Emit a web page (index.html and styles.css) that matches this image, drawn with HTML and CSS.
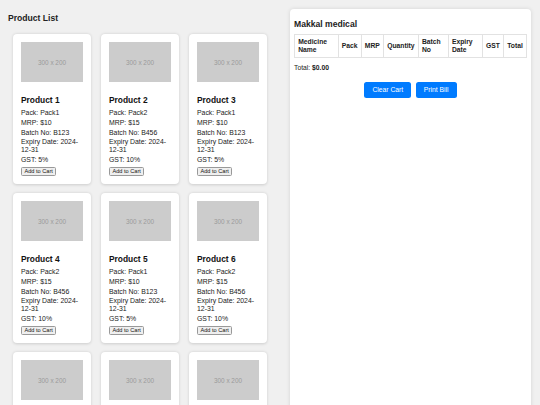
FILE: index.html
```html
<!DOCTYPE html>
<html lang="en">
<head>
    <meta charset="UTF-8">
    <meta name="viewport" content="width=device-width, initial-scale=1.0">
    <title>Makkal medical</title>
    <link rel="stylesheet" href="styles.css">
</head>
<body>
    <div class="app">
        <!-- Products -->
        <div class="product-section">
            <h2>Product List</h2>
            <div class="products">
                <div class="card">
                    <div class="thumb">300 x 200</div>
                    <h3>Product 1</h3>
                    <p>Pack: Pack1</p>
                    <p>MRP: $10</p>
                    <p>Batch No: B123</p>
                    <p>Expiry Date: 2024-12-31</p>
                    <p>GST: 5%</p>
                    <button class="add-btn">Add to Cart</button>
                </div>
                <div class="card">
                    <div class="thumb">300 x 200</div>
                    <h3>Product 2</h3>
                    <p>Pack: Pack2</p>
                    <p>MRP: $15</p>
                    <p>Batch No: B456</p>
                    <p>Expiry Date: 2024-12-31</p>
                    <p>GST: 10%</p>
                    <button class="add-btn">Add to Cart</button>
                </div>
                <div class="card">
                    <div class="thumb">300 x 200</div>
                    <h3>Product 3</h3>
                    <p>Pack: Pack1</p>
                    <p>MRP: $10</p>
                    <p>Batch No: B123</p>
                    <p>Expiry Date: 2024-12-31</p>
                    <p>GST: 5%</p>
                    <button class="add-btn">Add to Cart</button>
                </div>
                <div class="card">
                    <div class="thumb">300 x 200</div>
                    <h3>Product 4</h3>
                    <p>Pack: Pack2</p>
                    <p>MRP: $15</p>
                    <p>Batch No: B456</p>
                    <p>Expiry Date: 2024-12-31</p>
                    <p>GST: 10%</p>
                    <button class="add-btn">Add to Cart</button>
                </div>
                <div class="card">
                    <div class="thumb">300 x 200</div>
                    <h3>Product 5</h3>
                    <p>Pack: Pack1</p>
                    <p>MRP: $10</p>
                    <p>Batch No: B123</p>
                    <p>Expiry Date: 2024-12-31</p>
                    <p>GST: 5%</p>
                    <button class="add-btn">Add to Cart</button>
                </div>
                <div class="card">
                    <div class="thumb">300 x 200</div>
                    <h3>Product 6</h3>
                    <p>Pack: Pack2</p>
                    <p>MRP: $15</p>
                    <p>Batch No: B456</p>
                    <p>Expiry Date: 2024-12-31</p>
                    <p>GST: 10%</p>
                    <button class="add-btn">Add to Cart</button>
                </div>
                <div class="card">
                    <div class="thumb">300 x 200</div>
                    <h3>Product 7</h3>
                    <p>Pack: Pack1</p>
                    <p>MRP: $10</p>
                    <p>Batch No: B123</p>
                    <p>Expiry Date: 2024-12-31</p>
                    <p>GST: 5%</p>
                    <button class="add-btn">Add to Cart</button>
                </div>
                <div class="card">
                    <div class="thumb">300 x 200</div>
                    <h3>Product 8</h3>
                    <p>Pack: Pack2</p>
                    <p>MRP: $15</p>
                    <p>Batch No: B456</p>
                    <p>Expiry Date: 2024-12-31</p>
                    <p>GST: 10%</p>
                    <button class="add-btn">Add to Cart</button>
                </div>
                <div class="card">
                    <div class="thumb">300 x 200</div>
                    <h3>Product 9</h3>
                    <p>Pack: Pack1</p>
                    <p>MRP: $10</p>
                    <p>Batch No: B123</p>
                    <p>Expiry Date: 2024-12-31</p>
                    <p>GST: 5%</p>
                    <button class="add-btn">Add to Cart</button>
                </div>
            </div>
        </div>

        <!-- Cart / bill -->
        <div class="cart">
            <h2>Makkal medical</h2>
            <table class="bill">
                <thead>
                    <tr>
                        <th>Medicine Name</th>
                        <th>Pack</th>
                        <th>MRP</th>
                        <th>Quantity</th>
                        <th>Batch No</th>
                        <th>Expiry Date</th>
                        <th>GST</th>
                        <th>Total</th>
                    </tr>
                </thead>
                <tbody></tbody>
            </table>
            <p class="total">Total: <strong>$0.00</strong></p>
            <div class="actions">
                <button class="btn">Clear Cart</button>
                <button class="btn">Print Bill</button>
            </div>
        </div>
    </div>
</body>
</html>
```

FILE: styles.css
```css
/* Page layout */
body {
    margin: 0;
    font-family: "Liberation Sans", Arial, sans-serif;
    background-color: #f0f0f0;
    color: #222;
}

.app {
    display: flex;
    gap: 10px;
    padding: 9px 9px 0 8px;
}

/* Product list column */
.product-section {
    width: 272px;
    flex-shrink: 0;
}

.product-section h2 {
    font-size: 8.6px;
    line-height: 9.7px;
    margin: 5.4px 0 10px;
}

.products {
    display: grid;
    grid-template-columns: repeat(3, 78px);
    gap: 9px 10px;
    padding-left: 5px;
}

/* Product card */
.card {
    display: flex;
    flex-direction: column;
    align-items: flex-start;
    height: 150px;
    box-sizing: border-box;
    padding: 8px;
    background-color: #fff;
    border-radius: 4px;
    box-shadow: 0 0.5px 3px rgba(0, 0, 0, 0.15);
}

.thumb {
    width: 62px;
    height: 41px;
    display: flex;
    justify-content: center;
    align-items: center;
    background-color: #ccc;
    color: #9a9a9a;
    font-size: 6.4px;
}

.card h3 {
    font-size: 8.4px;
    line-height: 9.4px;
    margin: 13.5px 0 4px;
    color: #111;
}

.card p {
    font-size: 6.9px;
    line-height: 7.7px;
    margin: 0 0 2px;
}

.add-btn {
    margin-top: 1px;
    padding: 0.6px 2.5px;
    font-family: inherit;
    font-size: 5.6px;
    line-height: 6.4px;
    background-color: #efefef;
    border: 0.6px solid #999;
    border-radius: 1.5px;
    color: #111;
}

/* Cart panel */
.cart {
    flex: 1;
    padding: 4px;
    background-color: #fff;
    border-radius: 4px;
    box-shadow: 0 0 4px rgba(0, 0, 0, 0.12);
    min-height: 420px;
}

.cart h2 {
    font-size: 8.6px;
    line-height: 9.7px;
    margin: 7px 0 4.3px;
}

.bill {
    width: 100%;
    border-collapse: collapse;
}

.bill th {
    padding: 3.2px;
    font-size: 6.75px;
    line-height: 7.7px;
    text-align: left;
    border: 1px solid #e2e2e2;
}

.total {
    font-size: 6.75px;
    line-height: 7.7px;
    margin: 6.5px 0 0;
}

.actions {
    display: flex;
    justify-content: center;
    gap: 4.6px;
    margin-top: 9.8px;
}

.btn {
    padding: 4.2px 8px;
    font-family: inherit;
    font-size: 6.75px;
    line-height: 7.7px;
    color: #fff;
    background-color: #007bff;
    border: none;
    border-radius: 2.5px;
    cursor: pointer;
}
```
